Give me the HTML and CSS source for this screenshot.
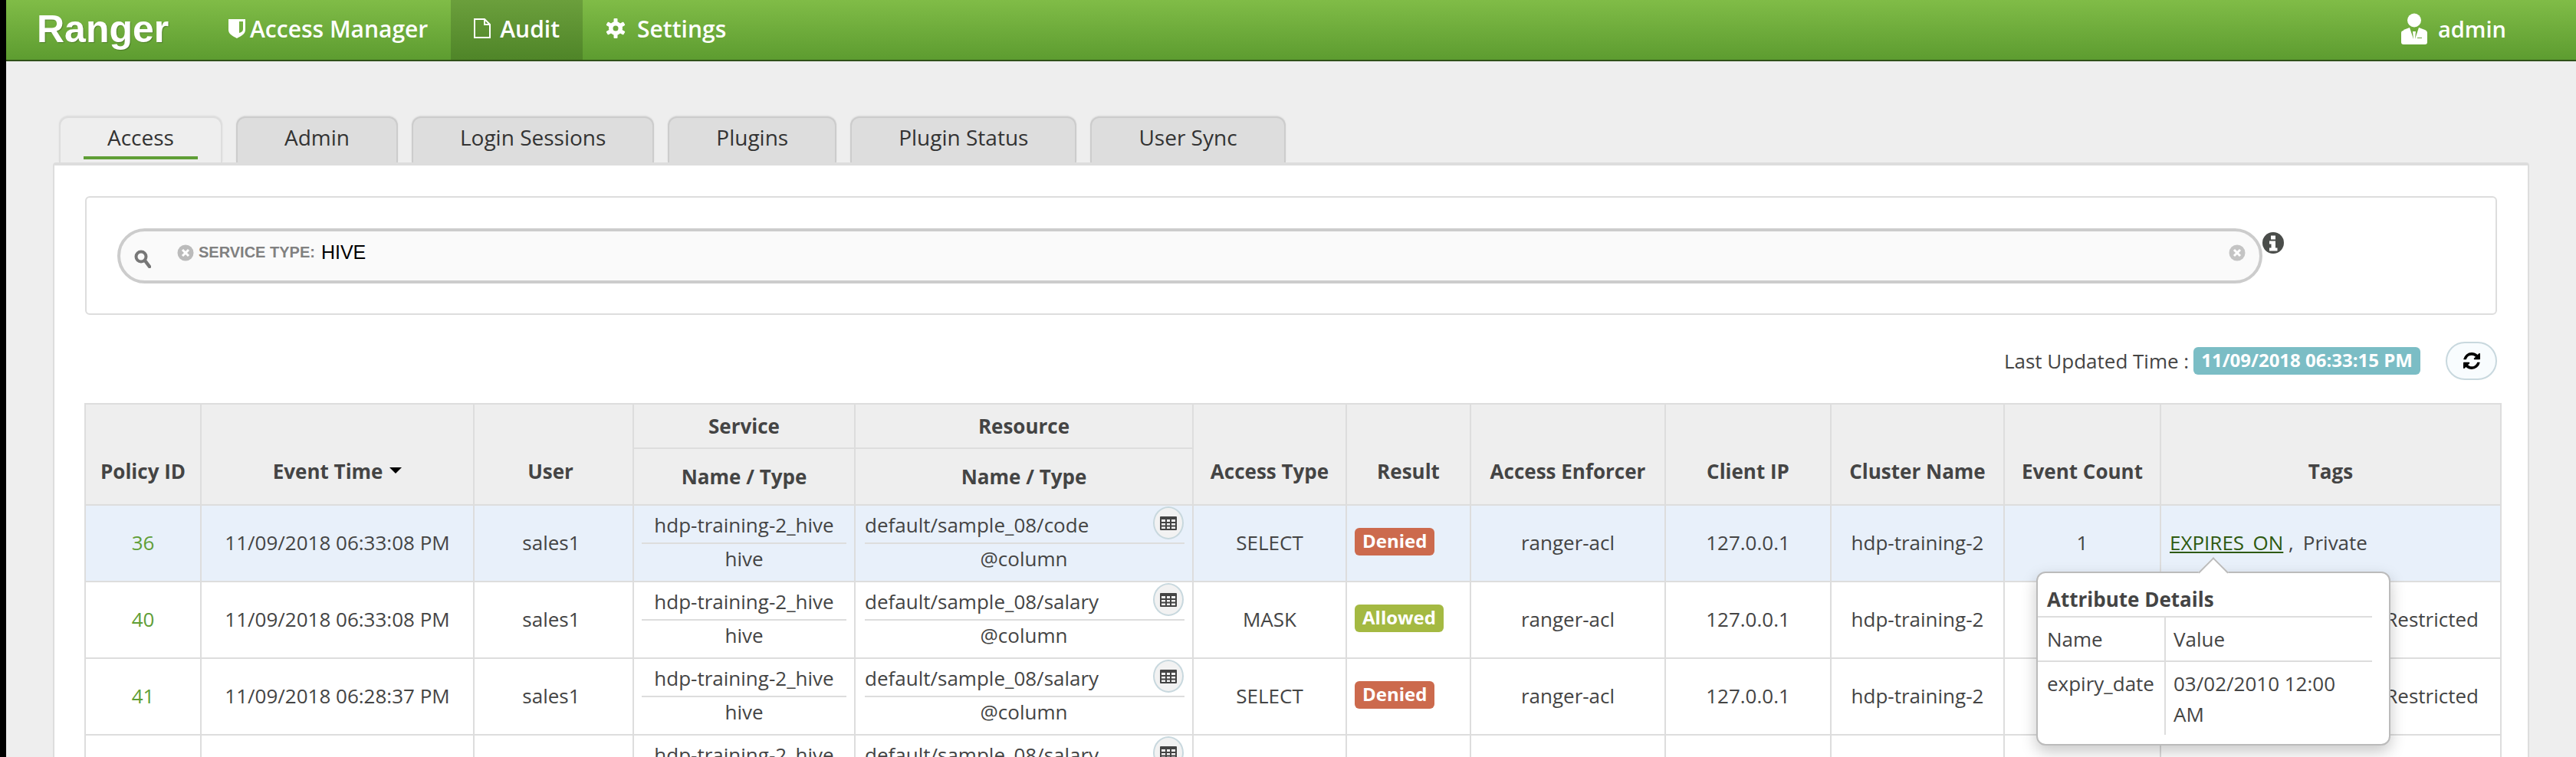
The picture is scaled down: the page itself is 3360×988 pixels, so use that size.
FILE: index.html
```html
<!DOCTYPE html>
<html lang="en">
<head>
<meta charset="utf-8">
<title>Ranger - Audit</title>
<link rel="stylesheet" href="styles.css">
</head>
<body>
<header class="topbar">
  <a class="brand">Ranger</a>
  <nav class="nav">
    <a class="nav-item nav-first">
      <svg class="nav-shield" viewBox="0 0 22 26"><path fill="#fff" fill-rule="evenodd" d="M0 1h22v14c0 5-5 8-11 11C5 23 0 20 0 15zM14 4v15c3-1 5-2 5-5V4z"/></svg>
      <span>Access Manager</span>
    </a>
    <a class="nav-item nav-active">
      <svg class="nav-icon" viewBox="0 0 22 26"><path fill="none" stroke="#fff" stroke-width="2" d="M1 1h13l7 7v17H1zM14 1v7h7"/></svg>
      <span>Audit</span>
    </a>
    <a class="nav-item">
      <svg class="nav-gear" viewBox="0 0 26 26"><g fill="#fff"><path fill-rule="evenodd" d="M13 4a9 9 0 1 0 0 18 9 9 0 0 0 0-18zm0 5.500a3.500 3.500 0 1 1 0 7 3.500 3.500 0 0 1 0-7z"/><rect x="10.500" y="0" width="5" height="26" rx="1"/><rect x="10.500" y="0" width="5" height="26" rx="1" transform="rotate(60 13 13)"/><rect x="10.500" y="0" width="5" height="26" rx="1" transform="rotate(120 13 13)"/></g><circle cx="13" cy="13" r="3.500" fill="#6ba83a"/></svg>
      <span>Settings</span>
    </a>
  </nav>
  <div class="user">
    <svg class="user-icon" viewBox="0 0 34 41"><circle cx="17" cy="9.500" r="9" fill="#fff"/><path fill="#fff" d="M3 22l8-3 5 15-1-10h4l-1 10 5-15 8 3c2 1 3 2 3 4v12c0 2-1 3-3 3H3c-2 0-3-1-3-3V26c0-2 1-3 3-3z"/><rect x="21" y="32" width="6" height="1" fill="#6ba83a"/></svg>
    <span>admin</span>
  </div>
</header>

<main class="page">
  <ul class="tabs">
    <li class="tab tab-active"><span class="tab-label">Access</span></li>
    <li class="tab"><span class="tab-label">Admin</span></li>
    <li class="tab"><span class="tab-label">Login Sessions</span></li>
    <li class="tab"><span class="tab-label">Plugins</span></li>
    <li class="tab"><span class="tab-label">Plugin Status</span></li>
    <li class="tab"><span class="tab-label">User Sync</span></li>
  </ul>

  <section class="panel">
    <div class="search-panel">
      <div class="search-field">
        <svg class="search-icon" viewBox="0 0 22 24"><circle cx="9" cy="9" r="6.500" fill="none" stroke="#777" stroke-width="4"/><path d="M14 14l6 8" stroke="#777" stroke-width="4.500" stroke-linecap="round"/></svg>
        <svg class="clear-icon" viewBox="0 0 22 22"><circle cx="11" cy="11" r="10.500" fill="#bbb"/><path d="M7 7l8 8M15 7l-8 8" stroke="#fff" stroke-width="3"/></svg>
        <span class="facet-label">SERVICE TYPE:</span>
        <span class="facet-value">HIVE</span>
        <svg class="clear-icon clear-end" viewBox="0 0 22 22"><circle cx="11" cy="11" r="10.500" fill="#c4c4c4"/><path d="M7 7l8 8M15 7l-8 8" stroke="#fff" stroke-width="3"/></svg>
      </div>
      <svg class="info-icon" viewBox="0 0 28 28"><circle cx="14" cy="14" r="14" fill="#4a4d4a"/><rect x="11" y="4.500" width="6" height="5" fill="#fff"/><path fill="#fff" d="M9 11.500h8v9h2.500v4h-10.500v-4h2.500v-5h-2.500z"/></svg>
    </div>

    <div class="updated">
      <span class="updated-label">Last Updated Time :</span>
      <span class="badge badge-info">11/09/2018 06:33:15 PM</span>
      <button class="refresh" type="button">
        <svg viewBox="0 0 1536 1536"><path fill="#000" d="M1511 928q0 5-1 7-64 268-268 434.500t-478 166.500q-146 0-282.500-55t-243.500-157l-129 129q-19 19-45 19t-45-19-19-45v-448q0-26 19-45t45-19h448q26 0 45 19t19 45-19 45l-137 137q71 66 161 102t187 36q134 0 250-65t186-179q11-17 53-117 8-23 30-23h192q13 0 22.500 9.500t9.500 22.500zm25-800v448q0 26-19 45t-45 19h-448q-26 0-45-19t-19-45 19-45l138-138q-148-137-349-137-134 0-250 65t-186 179q-11 17-53 117-8 23-30 23h-199q-13 0-22.500-9.500t-9.500-22.500v-7q65-268 270-434.500t480-166.500q146 0 284 55.500t245 156.500l130-129q19-19 45-19t45 19 19 45z"/></svg>
      </button>
    </div>

    <table class="audit">
      <colgroup>
        <col class="c-id"><col class="c-time"><col class="c-user"><col class="c-service"><col class="c-resource"><col class="c-access"><col class="c-result"><col class="c-enforcer"><col class="c-ip"><col class="c-cluster"><col class="c-count"><col class="c-tags">
      </colgroup>
      <thead>
        <tr class="head-a">
          <th rowspan="2" class="th-main">Policy ID</th>
          <th rowspan="2" class="th-main">Event Time <i class="caret"></i></th>
          <th rowspan="2" class="th-main th-user">User</th>
          <th>Service</th>
          <th>Resource</th>
          <th rowspan="2" class="th-main">Access Type</th>
          <th rowspan="2" class="th-main">Result</th>
          <th rowspan="2" class="th-main">Access Enforcer</th>
          <th rowspan="2" class="th-main">Client IP</th>
          <th rowspan="2" class="th-main">Cluster Name</th>
          <th rowspan="2" class="th-main">Event Count</th>
          <th rowspan="2" class="th-main">Tags</th>
        </tr>
        <tr class="head-b">
          <th>Name / Type</th>
          <th>Name / Type</th>
        </tr>
      </thead>
      <tbody>
        <tr class="row-hover">
          <td class="id">36</td><td>11/09/2018 06:33:08 PM</td><td class="user-cell">sales1</td>
          <td class="stack-cell"><div class="stack-top">hdp-training-2_hive</div><div class="stack-bottom">hive</div></td>
          <td class="stack-cell res"><div class="stack-top">default/sample_08/code</div><div class="stack-bottom">@column</div><button class="grid-btn" type="button"><svg viewBox="0 0 22 18"><use href="#grid"/></svg></button></td>
          <td>SELECT</td>
          <td class="result"><span class="badge badge-denied">Denied</span></td>
          <td>ranger-acl</td><td>127.0.0.1</td><td>hdp-training-2</td><td>1</td>
          <td class="tags">
            <a class="tag-link">EXPIRES_ON</a> ,<span class="tag-next">Private</span>
            <div class="popover">
              <i class="popover-arrow"></i>
              <h3 class="popover-title">Attribute Details</h3>
              <table class="attr">
                <tr class="attr-head"><td>Name</td><td>Value</td></tr>
                <tr class="attr-body"><td>expiry_date</td><td>03/02/2010 12:00 AM</td></tr>
              </table>
            </div>
          </td>
        </tr>
        <tr>
          <td class="id">40</td><td>11/09/2018 06:33:08 PM</td><td class="user-cell">sales1</td>
          <td class="stack-cell"><div class="stack-top">hdp-training-2_hive</div><div class="stack-bottom">hive</div></td>
          <td class="stack-cell res"><div class="stack-top">default/sample_08/salary</div><div class="stack-bottom">@column</div><button class="grid-btn" type="button"><svg viewBox="0 0 22 18"><use href="#grid"/></svg></button></td>
          <td>MASK</td>
          <td class="result"><span class="badge badge-allowed">Allowed</span></td>
          <td>ranger-acl</td><td>127.0.0.1</td><td>hdp-training-2</td><td>1</td>
          <td class="tags-right">Restricted</td>
        </tr>
        <tr>
          <td class="id">41</td><td>11/09/2018 06:28:37 PM</td><td class="user-cell">sales1</td>
          <td class="stack-cell"><div class="stack-top">hdp-training-2_hive</div><div class="stack-bottom">hive</div></td>
          <td class="stack-cell res"><div class="stack-top">default/sample_08/salary</div><div class="stack-bottom">@column</div><button class="grid-btn" type="button"><svg viewBox="0 0 22 18"><use href="#grid"/></svg></button></td>
          <td>SELECT</td>
          <td class="result"><span class="badge badge-denied">Denied</span></td>
          <td>ranger-acl</td><td>127.0.0.1</td><td>hdp-training-2</td><td>1</td>
          <td class="tags-right">Restricted</td>
        </tr>
        <tr>
          <td class="id"></td><td></td><td class="user-cell"></td>
          <td class="stack-cell"><div class="stack-top">hdp-training-2_hive</div></td>
          <td class="stack-cell res"><div class="stack-top">default/sample_08/salary</div><button class="grid-btn" type="button"><svg viewBox="0 0 22 18"><use href="#grid"/></svg></button></td>
          <td></td><td class="result"></td><td></td><td></td><td></td><td></td><td></td>
        </tr>
      </tbody>
    </table>
  </section>
</main>

<svg class="defs" width="0" height="0">
  <symbol id="grid" viewBox="0 0 22 18">
    <path fill="#444" fill-rule="evenodd" d="M1 0h20a1 1 0 0 1 1 1v16a1 1 0 0 1-1 1H1a1 1 0 0 1-1-1V1a1 1 0 0 1 1-1zM2 4v3h5V4zm7 0v3h4V4zm6 0v3h5V4zM2 9v2.500h5V9zm7 0v2.500h4V9zm6 0v2.500h5V9zM2 13.500V16h5v-2.500zm7 0V16h4v-2.500zm6 0V16h5v-2.500z"/>
  </symbol>
</svg>
</body>
</html>
```

FILE: styles.css
```css
* { box-sizing: border-box; }

html, body {
  margin: 0;
  height: 988px;
  overflow: hidden;
}

body {
  background: #eee;
  border-left: 8px solid #000;
  font-family: "Open Sans", sans-serif;
  font-size: 26px;
  color: #444;
}

.defs { position: absolute; }

/* top bar */
.topbar {
  display: flex;
  align-items: stretch;
  height: 80px;
  padding-left: 40px;
  padding-right: 91px;
  background: linear-gradient(to bottom, #80bc47, #5d9c30);
  border-bottom: 2px solid #2f4f18;
  color: #fff;
}

.brand {
  display: flex;
  align-items: center;
  width: 220px;
  font-family: "Liberation Sans", sans-serif;
  font-weight: 700;
  font-size: 50px;
  padding-bottom: 2px;
  text-shadow: 1px 1px 1px rgba(0, 0, 0, .25);
}

.nav { display: flex; align-items: stretch; }

.nav-item {
  display: flex;
  align-items: center;
  gap: 12px;
  padding: 0 30px 4px;
  font-size: 30px;
  font-weight: 600;
}

.nav-first { gap: 6px; }

.nav-active {
  background: linear-gradient(to bottom, #6b9f3c, #4f8528);
}

.nav-shield { width: 22px; height: 26px; }
.nav-icon { width: 22px; height: 26px; }
.nav-gear { width: 26px; height: 26px; margin-right: 3px; }

.user {
  margin-left: auto;
  display: flex;
  align-items: center;
  gap: 14px;
  font-size: 29px;
  font-weight: 600;
  padding-bottom: 4px;
}

.user-icon { width: 34px; height: 41px; }

/* page */
.page { padding: 72px 61px 0; }

.tabs {
  display: flex;
  gap: 18px;
  list-style: none;
  margin: 0;
  padding: 0 0 0 8px;
  height: 60px;
}

.tab {
  height: 60px;
  padding: 0 30px;
  background: #ddd;
  border: 2px solid #ccc;
  border-bottom: 0;
  border-radius: 12px 12px 0 0;
  box-shadow: 0 -1px 2px rgba(0, 0, 0, .08);
  color: #333;
  font-size: 28px;
  text-align: center;
}

.tab-active { background: #eee; border-color: #ddd; }

.tab-label {
  display: block;
  height: 54px;
  line-height: 50px;
  padding: 0 31px;
}

.tab-active .tab-label { border-bottom: 4px solid #5f9e36; }

.panel {
  position: relative;
  background: #fff;
  border: 2px solid #ddd;
  border-top-width: 4px;
  border-radius: 4px;
  padding: 40px 40px 0;
  height: 800px;
}

.search-panel {
  display: flex;
  align-items: flex-start;
  height: 155px;
  padding: 40px 0 0 40px;
  border: 2px solid #ddd;
  border-radius: 6px;
}

.search-field {
  display: flex;
  align-items: center;
  width: 2798px;
  height: 72px;
  padding: 0 18px 9px 18px;
  background: #fafafa;
  border: 4px solid #ccc;
  border-radius: 36px;
}

.search-icon { width: 22px; height: 24px; margin-top: 17px; }

.clear-icon { width: 22px; height: 22px; margin-left: 34px; }

.facet-label {
  margin-left: 6px;
  font-family: "Liberation Sans", sans-serif;
  font-weight: 700;
  font-size: 20px;
  color: #808080;
}

.facet-value {
  margin-left: 8px;
  font-family: "Liberation Sans", sans-serif;
  font-size: 25px;
  color: #000;
}

.clear-end { margin-left: auto; }

.info-icon { width: 28px; height: 28px; margin-top: 5px; flex: none; }

.updated {
  display: flex;
  align-items: center;
  justify-content: flex-end;
  height: 50px;
  margin-top: 35px;
}

.updated-label { margin-right: 6px; }

.badge {
  display: inline-block;
  padding: 0 10px;
  height: 36px;
  line-height: 34px;
  border-radius: 6px;
  color: #fff;
  font-weight: 700;
  font-size: 24px;
  vertical-align: middle;
}

.badge-info { background: #7bbdc5; margin-right: 33px; }
.badge-denied { background: #cc6a4d; }
.badge-allowed { background: #a4b942; }

.refresh {
  display: flex;
  align-items: center;
  justify-content: center;
  width: 67px;
  height: 50px;
  padding: 0;
  background: #f8fcfe;
  border: 2px solid #c8d8de;
  border-radius: 25px;
}

.refresh svg { width: 22px; height: 22px; }

/* table */
.audit {
  table-layout: fixed;
  border-collapse: collapse;
  width: 3151px;
  margin: 30px 0 0 -1px;
}

.c-id { width: 151px; }
.c-time { width: 356px; }
.c-user { width: 208px; }
.c-service { width: 289px; }
.c-resource { width: 441px; }
.c-access { width: 200px; }
.c-result { width: 162px; }
.c-enforcer { width: 254px; }
.c-ip { width: 216px; }
.c-cluster { width: 226px; }
.c-count { width: 204px; }
.c-tags { width: 444px; }

.audit th,
.audit > tbody > tr > td {
  border: 2px solid #ddd;
  text-align: center;
  padding: 0;
}

.audit th {
  background: #eee;
  font-weight: 700;
}

.head-a th { height: 58px; }
.head-b th { height: 74px; }
.audit .th-main { padding-top: 44px; line-height: 36px; }
.audit .th-user { padding-right: 8px; }
.audit > tbody > tr > td.user-cell { padding-right: 6px; }

.caret {
  display: inline-block;
  width: 0;
  height: 0;
  margin: 0 0 7px 2px;
  border-left: 8px solid transparent;
  border-right: 8px solid transparent;
  border-top: 8px solid #000;
}

.audit > tbody > tr > td { height: 100px; padding-bottom: 2px; }

.row-hover > td { background: #e8f0fa; }

.audit > tbody > tr > td.id { color: #5f9e36; }

.audit > tbody > tr > td.stack-cell { vertical-align: top; padding: 0; position: relative; }

.stack-top {
  height: 50px;
  line-height: 50px;
  margin: 0 10px;
  border-bottom: 2px solid #ddd;
}

.res .stack-top { text-align: left; margin-left: 12px; }

.stack-bottom { line-height: 38px; }

.grid-btn {
  position: absolute;
  top: 1px;
  right: 11px;
  display: flex;
  align-items: center;
  justify-content: center;
  width: 40px;
  height: 43px;
  padding: 0;
  background: #f2f2f2;
  border: 2px solid #c8d8de;
  border-radius: 50%;
}

.grid-btn svg { width: 22px; height: 18px; }

.audit > tbody > tr > td.result { text-align: left; padding-left: 10px; padding-bottom: 8px; }

.audit > tbody > tr > td.tags { text-align: left; padding-left: 11px; position: relative; }

.audit > tbody > tr > td.tags-right { text-align: right; padding-right: 28px; white-space: nowrap; }

.tag-link { color: #2e5a10; text-decoration: underline; }

.tag-next { margin-left: 12px; }

.popover {
  position: absolute;
  z-index: 5;
  top: 86px;
  left: -163px;
  width: 462px;
  height: 227px;
  background: #fff;
  border: 2px solid #bbb;
  border-radius: 12px;
  box-shadow: 0 8px 20px rgba(0, 0, 0, .22);
}

.popover-arrow {
  position: absolute;
  top: -15px;
  left: 215px;
  width: 28px;
  height: 28px;
  background: #fff;
  border: 2px solid #bbb;
  border-right: 0;
  border-bottom: 0;
  transform: rotate(45deg);
}

.popover-title {
  position: relative;
  margin: 0;
  height: 56px;
  padding: 16px 0 0 12px;
  line-height: 36px;
  font-size: 26px;
  font-weight: 700;
}

.attr {
  position: relative;
  border-collapse: collapse;
  table-layout: fixed;
  width: 436px;
  line-height: 40px;
  background: #fff;
}

.attr td { padding: 0 10px 0 10px; vertical-align: top; }

.attr td:first-child { width: 166px; padding-left: 12px; border-right: 2px solid #ddd; white-space: nowrap; }

.attr-head td { border-top: 2px solid #ddd; border-bottom: 2px solid #ddd; height: 58px; padding-top: 8px; }

.attr-body td { height: 96px; padding-top: 8px; }
```
